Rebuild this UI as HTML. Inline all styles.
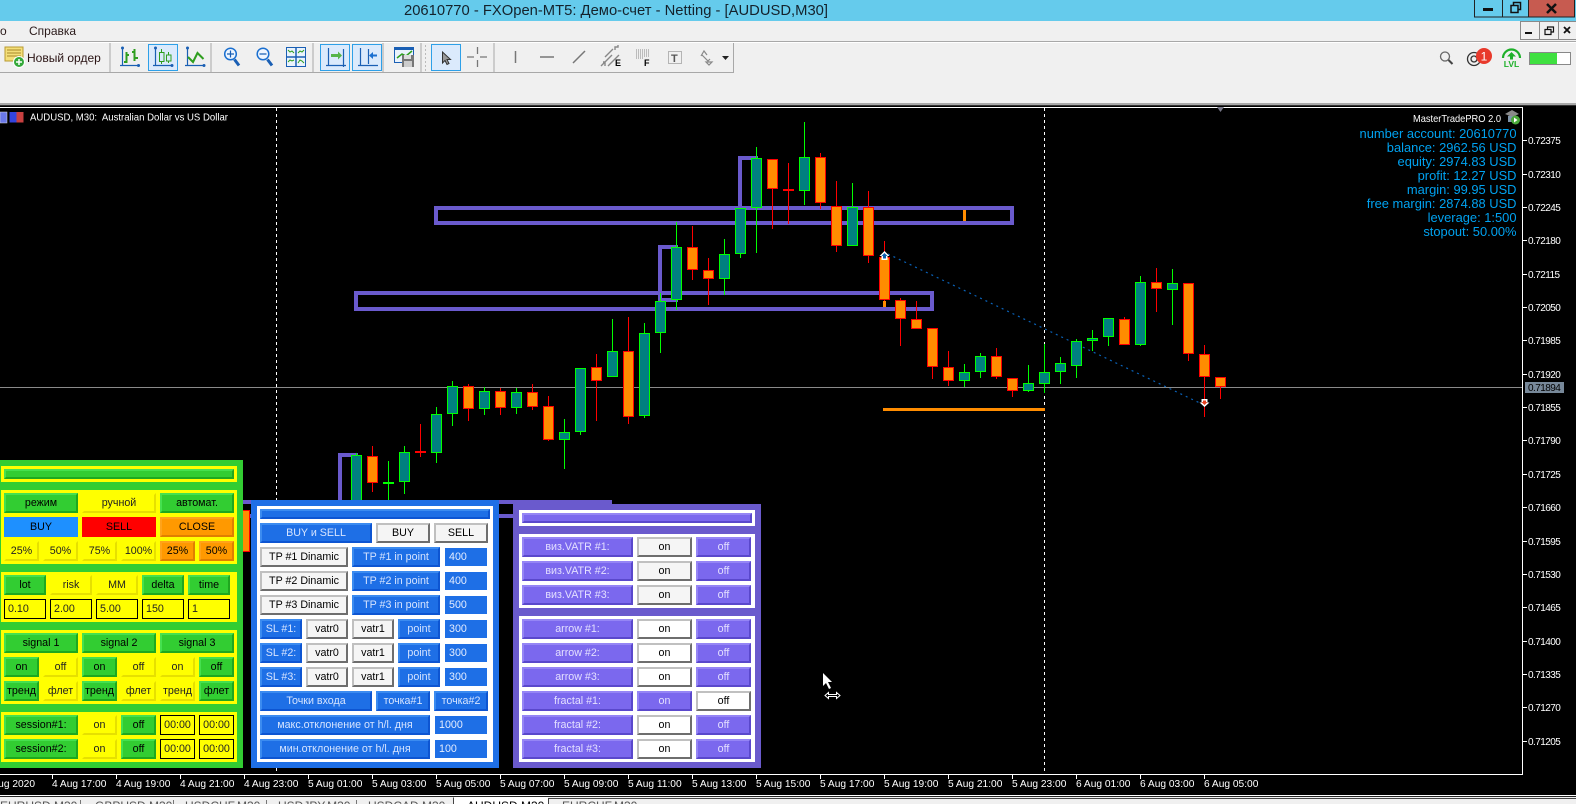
<!DOCTYPE html>
<html><head><meta charset="utf-8"><title>MT5</title>
<style>
html,body{margin:0;padding:0;background:#f0f0f0}
#p{position:relative;width:1576px;height:804px;overflow:hidden;background:#f0f0f0;font-family:"Liberation Sans","Noto Sans CJK SC",sans-serif}
#s{position:absolute;left:0;top:0}
text{font-family:"Liberation Sans","Noto Sans CJK SC",sans-serif}
.a,.b,.e,.be{position:absolute;box-sizing:border-box}
.b{height:20px;border:2px solid;text-align:center;font-size:10.7px;line-height:16px;color:#000;white-space:nowrap;overflow:hidden}
.g{background:#32cd32;border-color:#45e04f #1fa81f #1fa81f #45e04f}
.y{background:#ff0;border-color:#ff0 #e6e000 #e6e000 #ff0;color:#222}
.o{background:#f90;border-color:#ffa31a #e07f00 #e07f00 #ffa31a}
.w{background:#f5f5f5;border-color:#c0c0c0 #6e6e6e #6e6e6e #c0c0c0}
.wh{background:#fff;border-color:#c0c0c0 #6e6e6e #6e6e6e #c0c0c0}
.u{background:#1e6fe6;border-color:#3b8bf0 #0d55d2 #0d55d2 #3b8bf0;color:#d6e4ff}
.v{background:#7b68ee;border-color:#9585f5 #5a48cc #5a48cc #9585f5;color:#e4e0ff}
.e{height:20px;border:1px solid #000;background:#ff0;font-size:10.7px;line-height:18px;padding-left:3px;color:#222;white-space:nowrap}
.c{text-align:center;padding-left:0}
.be{height:18px;background:#1e6fe6;color:#e4edff;font-size:10.7px;line-height:18px;padding-left:4px}
.t{font-size:10.2px;fill:#fff}
.pr{font-size:10px;fill:#fff;letter-spacing:-.55px}
.inf{font-size:12.9px;fill:#00a2f0;text-anchor:end}
.tab{font-size:12px;fill:#555}
</style></head><body><div id="p">
<svg id="s" width="1576" height="804" viewBox="0 0 1576 804" xmlns="http://www.w3.org/2000/svg">
<!-- title bar -->
<rect x="0" y="0" width="1576" height="21" fill="#65cbec"/>
<text x="404" y="15" font-size="15" fill="#14222c" textLength="424" lengthAdjust="spacingAndGlyphs">20610770 - FXOpen-MT5: Демо-счет - Netting - [AUDUSD,M30]</text>
<rect x="1528.5" y="-1" width="46" height="18" fill="#c75b50" stroke="#222"/>
<rect x="1474.5" y="-1" width="28" height="18" fill="none" stroke="#222"/>
<rect x="1502.5" y="-1" width="26" height="18" fill="none" stroke="#222"/>
<rect x="1483" y="8" width="10" height="3" fill="#111"/>
<path d="M1511 5.5h7v7h-7zM1513.5 5V2.500h7v7h-2.500" fill="none" stroke="#111" stroke-width="1.500"/>
<path d="M1547 4l9 9M1556 4l-9 9" stroke="#111" stroke-width="2.500"/>
<!-- menu -->
<text x="0" y="35" font-size="12" fill="#2a1a1a">о</text>
<text x="29" y="35" font-size="12" fill="#2a1a1a">Справка</text>
<path d="M1520.500 39V21.500H1576M1539.500 21V39M1558.500 21V39M1520 39.500H1576" fill="none" stroke="#8a8a8a"/>
<rect x="1525" y="32" width="7" height="2" fill="#111"/>
<path d="M1545 29.500h6v5h-6zM1547.500 29v-2h6v5h-2" fill="none" stroke="#111" stroke-width="1.200"/>
<path d="M1564 27l6 6M1570 27l-6 6" stroke="#111" stroke-width="1.800"/>
<rect x="0" y="41" width="1576" height="1" fill="#a8a8a8"/>
<rect x="0" y="42" width="1576" height="1" fill="#fff"/>
<!-- toolbar -->
<rect x="0" y="72" width="734" height="1" fill="#a8a8a8"/>
<rect x="733" y="43" width="1" height="30" fill="#a8a8a8"/>
<path d="M110 43v29M211 43v29M313 43v29M383 43v29M421 43v29M494 43v29" stroke="#a8a8a8"/>
<path d="M425.500 45v27" stroke="#bbb" stroke-dasharray="2 2"/>
<g fill="#dbeafc" stroke="#2ea0e8"><rect x="148.500" y="44.500" width="29" height="26"/><rect x="320.500" y="44.500" width="29" height="26"/><rect x="352.500" y="44.500" width="29" height="26"/><rect x="431.500" y="44.500" width="29" height="26"/></g>
<!-- new order icon -->
<rect x="5" y="47" width="18" height="14" fill="#f4df79" stroke="#b99a30"/>
<path d="M7 50h14M7 53h14M7 56h14" stroke="#a88a2a"/>
<circle cx="19" cy="62" r="5.500" fill="#35a93a" stroke="#fff"/>
<path d="M19 59v6M16 62h6" stroke="#fff" stroke-width="1.500"/>
<text x="27" y="62" font-size="12" fill="#2a1414">Новый ордер</text>
<!-- chart icons -->
<g fill="none" stroke="#1a5fb4" stroke-width="1.200">
<path d="M122.500 48v18M120 65.500h20M155.500 48v18M153 65.500h20M187.500 48v18M185 65.500h20M328.500 48v18M326 65.500h20M343.500 49v18M360.500 48v18M358 65.500h20M368.500 49v15"/>
</g>
<g fill="#1a5fb4"><circle cx="122.500" cy="48" r="1.500"/><circle cx="138.500" cy="65.500" r="1.500"/><circle cx="155.500" cy="48" r="1.500"/><circle cx="172" cy="65.500" r="1.500"/><circle cx="187.500" cy="48" r="1.500"/><circle cx="204" cy="65.500" r="1.500"/></g>
<path d="M126.500 52v11M124 62h2M126 55h3M134.500 49v12M132 52h2M135 58h3" stroke="#2f9e1f" stroke-width="2" fill="none"/>
<path d="M161.500 49v15M168.500 52v11" stroke="#2f9e1f"/>
<rect x="159.500" y="52.500" width="4.500" height="9" fill="#dbeafc" stroke="#2f9e1f"/>
<rect x="166.500" y="55" width="4.500" height="6" fill="#dbeafc" stroke="#2f9e1f"/>
<path d="M188 57l5 5 4.500-9 6 6" fill="none" stroke="#2f9e1f" stroke-width="2"/>
<!-- zoom -->
<path d="M234.500 59.500l4.500 6M267.500 59.500l4.500 6" stroke="#1a5fb4" stroke-width="3"/>
<circle cx="230.500" cy="54" r="5.800" fill="#eef6ff" stroke="#1a6fd0" stroke-width="1.500"/>
<circle cx="263" cy="54" r="5.800" fill="#eef6ff" stroke="#1a6fd0" stroke-width="1.500"/>
<path d="M227 54h7M230.500 50.500v7M259.500 54h7" stroke="#1a5fb4" stroke-width="1.200"/>
<!-- tile -->
<rect x="286.500" y="47.500" width="19" height="19" fill="#eaf3fc" stroke="#1a5fb4"/>
<path d="M296 47.500v19M286.500 57h19" stroke="#1a5fb4" stroke-width="1.500"/>
<path d="M288 50l2 2 2-1 2 2M298 53l2-2 2 1 2-2M288 62l2-2 2 1 2-1M298 63l2-3 2 1 2 2" stroke="#2f9e1f" fill="none"/>
<!-- autoscroll / shift -->
<path d="M331 54h7v-2.500l4 4-4 4V57h-7z" fill="#55b54a"/>
<path d="M377 54.500h-4v-2.500l-4 3.500 4 3.500v-2.500h4z" fill="#1a6fd0"/>
<!-- save -->
<rect x="394.500" y="47.500" width="19" height="15" fill="#eaf3fc" stroke="#1a5fb4"/>
<rect x="394" y="47" width="20" height="3" fill="#1a5fb4"/>
<path d="M397 58l5-4 4 2 6-5" stroke="#2f9e1f" fill="none" stroke-width="1.500"/>
<rect x="402" y="55" width="12" height="12" fill="#777"/><rect x="404" y="55" width="7" height="4" fill="#ddd"/><rect x="404" y="61" width="8" height="6" fill="#ccc"/>
<!-- cursor etc -->
<path d="M442.500 52v11l2.500-2.500 2 4 2-1-2-4h3.500z" fill="#999" stroke="#333"/>
<path d="M467 57h7M480 57h7M477.500 47v7M477.500 60v7" stroke="#777" stroke-width="1.300"/>
<path d="M515.500 51v12M540 57h14M573 63l12-12" stroke="#777" stroke-width="1.500"/>
<path d="M601 66l11-11M608 66l11-11M605 57l8-8M605 66v-4h-2M615 50v-3h3v-2" fill="none" stroke="#888" stroke-width="1.400"/>
<text x="615" y="66" font-size="9" font-weight="bold" fill="#000">E</text>
<path d="M636 50h13M636 52h13M636 54h13M636 56h13M636 58h7" stroke="#888" stroke-dasharray="1 1"/>
<text x="644" y="66" font-size="9" font-weight="bold" fill="#000">F</text>
<rect x="668.500" y="51.500" width="13" height="12" fill="none" stroke="#777" stroke-dasharray="1 1"/>
<text x="671" y="62" font-size="11" font-family="Liberation Serif" font-weight="bold" fill="#555">T</text>
<path d="M701 56l3-5 3 4M702 55l6 6 2-2M706 62h6l-3 3z" fill="none" stroke="#888" stroke-width="1.200"/>
<path d="M722 56h7l-3.500 4z" fill="#222"/>
<!-- right toolbar -->
<circle cx="1445" cy="56.500" r="4.500" fill="none" stroke="#666" stroke-width="1.300"/>
<path d="M1448.500 60l4 4" stroke="#444" stroke-width="2"/>
<circle cx="1474" cy="59" r="6.500" fill="none" stroke="#333" stroke-width="1.300"/>
<circle cx="1474" cy="59" r="3" fill="none" stroke="#333" stroke-width="1.300"/>
<circle cx="1484" cy="56" r="8" fill="#e8392b"/>
<text x="1484" y="60.500" font-size="12" fill="#fff" text-anchor="middle">1</text>
<path d="M1503 58a8.500 8.500 0 0 1 17 0" fill="none" stroke="#1eb02a" stroke-width="2.200"/>
<path d="M1511.500 52l4.500 4.500h-3v3h-3v-3h-3z" fill="#1eb02a"/>
<text x="1511.500" y="67" font-size="8.500" font-weight="bold" fill="#1eb02a" text-anchor="middle">LVL</text>
<rect x="1529.500" y="52.500" width="41" height="12" fill="#fff" stroke="#888"/>
<rect x="1530" y="53" width="27" height="11" fill="#3fe040"/>
<!-- chart bg -->
<rect x="0" y="103" width="1576" height="2" fill="#a8a8a8"/>
<rect x="0" y="105" width="1576" height="1" fill="#333"/>
<rect x="0" y="106" width="1576" height="689" fill="#000"/>
<rect x="0" y="107" width="1523" height="1" fill="#fff"/>
<rect x="1522" y="107" width="1" height="668" fill="#fff"/>
<rect x="0" y="774" width="1523" height="1" fill="#fff"/>
<rect x="0" y="795" width="1576" height="1" fill="#fff"/>
<rect x="0" y="796" width="1576" height="1" fill="#222"/>
<!-- top-left chart icons -->
<rect x="0" y="112" width="7" height="11" fill="#6a78e8" stroke="#ddd" stroke-width=".5"/>
<rect x="9.500" y="112" width="7" height="10.500" fill="#3344dd"/><rect x="16.500" y="112" width="7" height="10.500" fill="#c84040"/>
<text x="30" y="120.500" font-size="10.200" fill="#fff" textLength="198" lengthAdjust="spacingAndGlyphs" style="white-space:pre">AUDUSD, M30:  Australian Dollar vs US Dollar</text>
<!-- grid lines -->
<path d="M276.500 108V774M1044.500 108V774" stroke="#fff" stroke-dasharray="3 3"/>
<rect x="0" y="387" width="1522" height="1" fill="#8a8a8a"/>
<path d="M1217 107h7l-3.500 5z" fill="#778"/>
<!-- purple -->
<g fill="none" stroke="#6a5acd" stroke-width="4">
<rect x="436" y="208" width="576" height="15"/>
<rect x="356" y="293" width="576" height="16"/>
<path d="M678 247H660V300H678M758 158H740V208M358 455H340V500"/>
<rect x="198" y="502" width="412" height="14"/>
</g>
<rect x="963" y="210" width="3" height="11" fill="#ff8c00"/>
<rect x="883" y="301" width="3" height="6" fill="#ff8c00"/>
<rect x="883" y="408" width="162" height="3" fill="#ff8c00"/>
<!-- dotted -->
<path d="M888 254L1204 405" stroke="#0a62b8" stroke-width="1.200" stroke-dasharray="2 4" fill="none"/>
<!-- wicks -->
<path fill="none" stroke="#0f0" d="M356.500 453V500M388.500 461V500M404.500 446V494M436.500 407V463M452.500 381V426M484.500 387V415M516.500 388V414M564.500 419V469M580.500 368V435M612.500 319V377M644.500 323V418M660.500 293V353M676.500 222V310M724.500 239V295M740.500 208V258M756.500 147V253M804.500 122V205M852.500 183V246M964.500 364V387M980.500 353V378M1028.500 365V392M1044.500 344V393M1060.500 357V384M1076.500 339V378M1092.500 330V351M1108.500 318V346M1140.500 276V346M1172.500 269V325"/>
<path fill="none" stroke="#f00" d="M372.500 446V492M420.500 424V457M468.500 384V421M500.500 388V415M532.500 384V410M548.500 396V441M596.500 354V421M628.500 317V424M692.500 226V280M708.500 258V305M772.500 159V229M788.500 163V224M820.500 153V209M836.500 181V252M868.500 191V263M884.500 241V301M900.500 298V346M916.500 301V329M932.500 328V379M948.500 351V386M996.500 348V379M1012.500 378V397M1124.500 317V345M1156.500 268V312M1188.500 283V361M1204.500 345V417M1220.500 377V399"/>
<!-- green bodies -->
<g fill="#008080" stroke="#0f0">
<rect x="351.500" y="455.500" width="10" height="45"/>
<rect x="383.500" y="482.500" width="10" height="1"/>
<rect x="399.500" y="452.500" width="10" height="29"/>
<rect x="431.500" y="414.500" width="10" height="38"/>
<rect x="447.500" y="386.500" width="10" height="27"/>
<rect x="479.500" y="391.500" width="10" height="17"/>
<rect x="511.500" y="392.500" width="10" height="15"/>
<rect x="559.500" y="432.500" width="10" height="7"/>
<rect x="575.500" y="368.500" width="10" height="63"/>
<rect x="607.500" y="351.500" width="10" height="25"/>
<rect x="639.500" y="333.500" width="10" height="82"/>
<rect x="655.500" y="301.500" width="10" height="31"/>
<rect x="671.500" y="247.500" width="10" height="52"/>
<rect x="719.500" y="254.500" width="10" height="24"/>
<rect x="735.500" y="208.500" width="10" height="45"/>
<rect x="751.500" y="158.500" width="10" height="49"/>
<rect x="799.500" y="157.500" width="10" height="33"/>
<rect x="847.500" y="207.500" width="10" height="38"/>
<rect x="959.500" y="372.500" width="10" height="8"/>
<rect x="975.500" y="356.500" width="10" height="15"/>
<rect x="1023.500" y="383.500" width="10" height="7"/>
<rect x="1039.500" y="372.500" width="10" height="11"/>
<rect x="1055.500" y="363.500" width="10" height="8"/>
<rect x="1071.500" y="341.500" width="10" height="24"/>
<rect x="1087.500" y="338.500" width="10" height="2"/>
<rect x="1103.500" y="318.500" width="10" height="18"/>
<rect x="1135.500" y="282.500" width="10" height="62"/>
<rect x="1167.500" y="283.500" width="10" height="6"/>
</g>
<!-- orange bodies -->
<g fill="#ff8c00" stroke="#f00">
<rect x="239.500" y="510.500" width="10" height="41"/>
<rect x="367.500" y="456.500" width="10" height="26"/>
<rect x="415.500" y="451.500" width="10" height="1"/>
<rect x="463.500" y="386.500" width="10" height="22"/>
<rect x="495.500" y="391.500" width="10" height="16"/>
<rect x="527.500" y="392.500" width="10" height="14"/>
<rect x="543.500" y="406.500" width="10" height="33"/>
<rect x="591.500" y="367.500" width="10" height="13"/>
<rect x="623.500" y="351.500" width="10" height="65"/>
<rect x="687.500" y="247.500" width="10" height="22"/>
<rect x="703.500" y="270.500" width="10" height="8"/>
<rect x="767.500" y="159.500" width="10" height="29"/>
<rect x="783.500" y="189.500" width="10" height="1"/>
<rect x="815.500" y="157.500" width="10" height="45"/>
<rect x="831.500" y="206.500" width="10" height="39"/>
<rect x="863.500" y="207.500" width="10" height="48"/>
<rect x="879.500" y="257.500" width="10" height="42"/>
<rect x="895.500" y="300.500" width="10" height="18"/>
<rect x="911.500" y="319.500" width="10" height="9"/>
<rect x="927.500" y="328.500" width="10" height="38"/>
<rect x="943.500" y="367.500" width="10" height="13"/>
<rect x="991.500" y="356.500" width="10" height="20"/>
<rect x="1007.500" y="378.500" width="10" height="12"/>
<rect x="1119.500" y="319.500" width="10" height="25"/>
<rect x="1151.500" y="282.500" width="10" height="6"/>
<rect x="1183.500" y="283.500" width="10" height="70"/>
<rect x="1199.500" y="354.500" width="10" height="22"/>
<rect x="1215.500" y="377.500" width="10" height="9"/>
</g>
<!-- arrows -->
<path d="M884.500 251l5 5h-2v4h-6v-4h-2z" fill="#fff"/>
<path d="M884.500 253l3 3h-1.500v2.500h-3V256h-1.500z" fill="#0a5fae"/>
<path d="M1204.500 407l5-4.500h-2V399h-6v3.500h-2z" fill="#fff"/>
<path d="M1204.500 405l3-3H1206v-1.500h-3v1.500h-1.500z" fill="#e8401f"/>
<!-- info -->
<text x="1413" y="122" font-size="10.500" fill="#fff" textLength="88" lengthAdjust="spacingAndGlyphs">MasterTradePRO 2.0</text>
<path d="M1505 114l7-4 7 4-7 3z" fill="#8a8a8a"/><rect x="1508" y="116" width="8" height="6" fill="#7f93a8"/>
<circle cx="1515.500" cy="120" r="4.500" fill="#4aa83a"/><path d="M1514 117.500l3.500 2.500-3.500 2.500z" fill="#fff"/>
<text class="inf" x="1516.500" y="138">number account: 20610770</text>
<text class="inf" x="1516.500" y="152">balance: 2962.56 USD</text>
<text class="inf" x="1516.500" y="166">equity: 2974.83 USD</text>
<text class="inf" x="1516.500" y="180">profit: 12.27 USD</text>
<text class="inf" x="1516.500" y="194">margin: 99.95 USD</text>
<text class="inf" x="1516.500" y="208">free margin: 2874.88 USD</text>
<text class="inf" x="1516.500" y="222">leverage: 1:500</text>
<text class="inf" x="1516.500" y="236">stopout: 50.00%</text>
<!-- price axis -->
<path stroke="#fff" d="M1523 140.500h4M1523 174.500h4M1523 207.500h4M1523 240.500h4M1523 274.500h4M1523 307.500h4M1523 340.500h4M1523 374.500h4M1523 407.500h4M1523 440.500h4M1523 474.500h4M1523 507.500h4M1523 541.500h4M1523 574.500h4M1523 607.500h4M1523 641.500h4M1523 674.500h4M1523 707.500h4M1523 741.500h4"/>
<text class="pr" x="1528" y="144">0.72375</text>
<text class="pr" x="1528" y="178">0.72310</text>
<text class="pr" x="1528" y="211">0.72245</text>
<text class="pr" x="1528" y="244">0.72180</text>
<text class="pr" x="1528" y="278">0.72115</text>
<text class="pr" x="1528" y="311">0.72050</text>
<text class="pr" x="1528" y="344">0.71985</text>
<text class="pr" x="1528" y="378">0.71920</text>
<rect x="1525" y="382" width="39" height="11" fill="#778899"/>
<text x="1528" y="391" font-size="10" letter-spacing="-.55" fill="#000">0.71894</text>
<text class="pr" x="1528" y="411">0.71855</text>
<text class="pr" x="1528" y="444">0.71790</text>
<text class="pr" x="1528" y="478">0.71725</text>
<text class="pr" x="1528" y="511">0.71660</text>
<text class="pr" x="1528" y="545">0.71595</text>
<text class="pr" x="1528" y="578">0.71530</text>
<text class="pr" x="1528" y="611">0.71465</text>
<text class="pr" x="1528" y="645">0.71400</text>
<text class="pr" x="1528" y="678">0.71335</text>
<text class="pr" x="1528" y="711">0.71270</text>
<text class="pr" x="1528" y="745">0.71205</text>
<!-- time axis -->
<path stroke="#fff" d="M52.500 775v4M116.500 775v4M180.500 775v4M244.500 775v4M308.500 775v4M372.500 775v4M436.500 775v4M500.500 775v4M564.500 775v4M628.500 775v4M692.500 775v4M756.500 775v4M820.500 775v4M884.500 775v4M948.500 775v4M1012.500 775v4M1076.500 775v4M1140.500 775v4M1204.500 775v4"/>
<text class="t" x="35" y="787" text-anchor="end">4 Aug 2020</text>
<text class="t" x="52" y="787">4 Aug 17:00</text>
<text class="t" x="116" y="787">4 Aug 19:00</text>
<text class="t" x="180" y="787">4 Aug 21:00</text>
<text class="t" x="244" y="787">4 Aug 23:00</text>
<text class="t" x="308" y="787">5 Aug 01:00</text>
<text class="t" x="372" y="787">5 Aug 03:00</text>
<text class="t" x="436" y="787">5 Aug 05:00</text>
<text class="t" x="500" y="787">5 Aug 07:00</text>
<text class="t" x="564" y="787">5 Aug 09:00</text>
<text class="t" x="628" y="787">5 Aug 11:00</text>
<text class="t" x="692" y="787">5 Aug 13:00</text>
<text class="t" x="756" y="787">5 Aug 15:00</text>
<text class="t" x="820" y="787">5 Aug 17:00</text>
<text class="t" x="884" y="787">5 Aug 19:00</text>
<text class="t" x="948" y="787">5 Aug 21:00</text>
<text class="t" x="1012" y="787">5 Aug 23:00</text>
<text class="t" x="1076" y="787">6 Aug 01:00</text>
<text class="t" x="1140" y="787">6 Aug 03:00</text>
<text class="t" x="1204" y="787">6 Aug 05:00</text>
<!-- tabs -->
<rect x="0" y="797" width="1576" height="7" fill="#f0f0f0"/>
<path d="M80.500 800v4M173.500 800v4M266.500 800v4M356.500 800v4" stroke="#777"/>
<rect x="454" y="797" width="94" height="7" fill="#fff"/>
<path d="M453.500 804V797.500M548.500 804V798.500H1576" fill="none" stroke="#444"/>
<text class="tab" x="0" y="810">EURUSD,M30</text>
<text class="tab" x="95" y="810">GBPUSD,M30</text>
<text class="tab" x="185" y="810">USDCHF,M30</text>
<text class="tab" x="278" y="810">USDJPY,M30</text>
<text class="tab" x="368" y="810">USDCAD,M30</text>
<text class="tab" x="467" y="810" style="fill:#000">AUDUSD,M30</text>
<text class="tab" x="562" y="810">EURCHF,M30</text>
</svg>

<!-- GREEN PANEL -->
<div class="a" style="left:0;top:460px;width:243px;height:308px;background:#32cd32"></div>
<div class="a" style="left:1px;top:466px;width:236px;height:16px;background:#ff0"></div>
<div class="b g" style="left:4px;top:469px;width:230px;height:10px"></div>
<div class="a" style="left:1px;top:490px;width:236px;height:74px;background:#ff0"></div>
<div class="a" style="left:1px;top:572px;width:236px;height:50px;background:#ff0"></div>
<div class="a" style="left:1px;top:630px;width:236px;height:74px;background:#ff0"></div>
<div class="a" style="left:1px;top:712px;width:236px;height:50px;background:#ff0"></div>
<div class="b g" style="left:4px;top:493px;width:74px">режим</div>
<div class="b y" style="left:82px;top:493px;width:74px">ручной</div>
<div class="b g" style="left:160px;top:493px;width:74px">автомат.</div>
<div class="b" style="left:4px;top:517px;width:74px;background:#1e90ff;border-color:#1e90ff">BUY</div>
<div class="b" style="left:82px;top:517px;width:74px;background:#f00;border-color:#f00">SELL</div>
<div class="b o" style="left:160px;top:517px;width:74px">CLOSE</div>
<div class="b y" style="left:4px;top:541px;width:35px">25%</div>
<div class="b y" style="left:43px;top:541px;width:35px">50%</div>
<div class="b y" style="left:82px;top:541px;width:35px">75%</div>
<div class="b y" style="left:121px;top:541px;width:35px">100%</div>
<div class="b o" style="left:160px;top:541px;width:35px">25%</div>
<div class="b o" style="left:199px;top:541px;width:35px">50%</div>
<div class="b g" style="left:4px;top:575px;width:42px">lot</div>
<div class="b y" style="left:50px;top:575px;width:42px">risk</div>
<div class="b y" style="left:96px;top:575px;width:42px">MM</div>
<div class="b g" style="left:142px;top:575px;width:42px">delta</div>
<div class="b g" style="left:188px;top:575px;width:42px">time</div>
<div class="e" style="left:4px;top:599px;width:42px">0.10</div>
<div class="e" style="left:50px;top:599px;width:42px">2.00</div>
<div class="e" style="left:96px;top:599px;width:42px">5.00</div>
<div class="e" style="left:142px;top:599px;width:42px">150</div>
<div class="e" style="left:188px;top:599px;width:42px">1</div>
<div class="b g" style="left:4px;top:633px;width:74px">signal 1</div>
<div class="b g" style="left:82px;top:633px;width:74px">signal 2</div>
<div class="b g" style="left:160px;top:633px;width:74px">signal 3</div>
<div class="b g" style="left:4px;top:657px;width:35px">on</div>
<div class="b y" style="left:43px;top:657px;width:35px">off</div>
<div class="b g" style="left:82px;top:657px;width:35px">on</div>
<div class="b y" style="left:121px;top:657px;width:35px">off</div>
<div class="b y" style="left:160px;top:657px;width:35px">on</div>
<div class="b g" style="left:199px;top:657px;width:35px">off</div>
<div class="b g" style="left:4px;top:681px;width:35px">тренд</div>
<div class="b y" style="left:43px;top:681px;width:35px">флет</div>
<div class="b g" style="left:82px;top:681px;width:35px">тренд</div>
<div class="b y" style="left:121px;top:681px;width:35px">флет</div>
<div class="b y" style="left:160px;top:681px;width:35px">тренд</div>
<div class="b g" style="left:199px;top:681px;width:35px">флет</div>
<div class="b g" style="left:4px;top:715px;width:74px">session#1:</div>
<div class="b y" style="left:82px;top:715px;width:35px">on</div>
<div class="b g" style="left:121px;top:715px;width:35px">off</div>
<div class="e c" style="left:160px;top:715px;width:35px">00:00</div>
<div class="e c" style="left:199px;top:715px;width:35px">00:00</div>
<div class="b g" style="left:4px;top:739px;width:74px">session#2:</div>
<div class="b y" style="left:82px;top:739px;width:35px">on</div>
<div class="b g" style="left:121px;top:739px;width:35px">off</div>
<div class="e c" style="left:160px;top:739px;width:35px">00:00</div>
<div class="e c" style="left:199px;top:739px;width:35px">00:00</div>

<!-- BLUE PANEL -->
<div class="a" style="left:251px;top:500px;width:248px;height:268px;background:#1e6fe6"></div>
<div class="a" style="left:257px;top:506px;width:236px;height:256px;background:#fff"></div>
<div class="b u" style="left:260px;top:509px;width:230px;height:10px"></div>
<div class="b u" style="left:260px;top:523px;width:112px">BUY и SELL</div>
<div class="b w" style="left:376px;top:523px;width:54px">BUY</div>
<div class="b w" style="left:434px;top:523px;width:54px">SELL</div>
<div class="b w" style="left:260px;top:547px;width:88px">TP #1 Dinamic</div>
<div class="b u" style="left:352px;top:547px;width:88px">TP #1 in point</div>
<div class="be" style="left:445px;top:548px;width:42px">400</div>
<div class="b w" style="left:260px;top:571px;width:88px">TP #2 Dinamic</div>
<div class="b u" style="left:352px;top:571px;width:88px">TP #2 in point</div>
<div class="be" style="left:445px;top:572px;width:42px">400</div>
<div class="b w" style="left:260px;top:595px;width:88px">TP #3 Dinamic</div>
<div class="b u" style="left:352px;top:595px;width:88px">TP #3 in point</div>
<div class="be" style="left:445px;top:596px;width:42px">500</div>
<div class="b u" style="left:260px;top:619px;width:42px">SL #1:</div>
<div class="b w" style="left:306px;top:619px;width:42px">vatr0</div>
<div class="b w" style="left:352px;top:619px;width:42px">vatr1</div>
<div class="b u" style="left:398px;top:619px;width:42px">point</div>
<div class="be" style="left:445px;top:620px;width:42px">300</div>
<div class="b u" style="left:260px;top:643px;width:42px">SL #2:</div>
<div class="b w" style="left:306px;top:643px;width:42px">vatr0</div>
<div class="b w" style="left:352px;top:643px;width:42px">vatr1</div>
<div class="b u" style="left:398px;top:643px;width:42px">point</div>
<div class="be" style="left:445px;top:644px;width:42px">300</div>
<div class="b u" style="left:260px;top:667px;width:42px">SL #3:</div>
<div class="b w" style="left:306px;top:667px;width:42px">vatr0</div>
<div class="b w" style="left:352px;top:667px;width:42px">vatr1</div>
<div class="b u" style="left:398px;top:667px;width:42px">point</div>
<div class="be" style="left:445px;top:668px;width:42px">300</div>
<div class="b u" style="left:260px;top:691px;width:112px">Точки входа</div>
<div class="b u" style="left:376px;top:691px;width:54px">точка#1</div>
<div class="b u" style="left:434px;top:691px;width:54px">точка#2</div>
<div class="b u" style="left:260px;top:715px;width:170px">макс.отклонение от h/l. дня</div>
<div class="be" style="left:435px;top:716px;width:52px">1000</div>
<div class="b u" style="left:260px;top:739px;width:170px">мин.отклонение от h/l. дня</div>
<div class="be" style="left:435px;top:740px;width:52px">100</div>

<!-- PURPLE PANEL -->
<div class="a" style="left:513px;top:504px;width:248px;height:264px;background:#6a5acd"></div>
<div class="a" style="left:519px;top:510px;width:236px;height:16px;background:#fff"></div>
<div class="b v" style="left:522px;top:513px;width:230px;height:10px"></div>
<div class="a" style="left:519px;top:534px;width:236px;height:74px;background:#fff"></div>
<div class="a" style="left:519px;top:616px;width:236px;height:146px;background:#fff"></div>
<div class="b v" style="left:522px;top:537px;width:111px">виз.VATR #1:</div>
<div class="b w" style="left:637px;top:537px;width:55px">on</div>
<div class="b v" style="left:696px;top:537px;width:55px">off</div>
<div class="b v" style="left:522px;top:561px;width:111px">виз.VATR #2:</div>
<div class="b w" style="left:637px;top:561px;width:55px">on</div>
<div class="b v" style="left:696px;top:561px;width:55px">off</div>
<div class="b v" style="left:522px;top:585px;width:111px">виз.VATR #3:</div>
<div class="b w" style="left:637px;top:585px;width:55px">on</div>
<div class="b v" style="left:696px;top:585px;width:55px">off</div>
<div class="b v" style="left:522px;top:619px;width:111px">arrow #1:</div>
<div class="b wh" style="left:637px;top:619px;width:55px">on</div>
<div class="b v" style="left:696px;top:619px;width:55px">off</div>
<div class="b v" style="left:522px;top:643px;width:111px">arrow #2:</div>
<div class="b wh" style="left:637px;top:643px;width:55px">on</div>
<div class="b v" style="left:696px;top:643px;width:55px">off</div>
<div class="b v" style="left:522px;top:667px;width:111px">arrow #3:</div>
<div class="b wh" style="left:637px;top:667px;width:55px">on</div>
<div class="b v" style="left:696px;top:667px;width:55px">off</div>
<div class="b v" style="left:522px;top:691px;width:111px">fractal #1:</div>
<div class="b v" style="left:637px;top:691px;width:55px">on</div>
<div class="b wh" style="left:696px;top:691px;width:55px">off</div>
<div class="b v" style="left:522px;top:715px;width:111px">fractal #2:</div>
<div class="b wh" style="left:637px;top:715px;width:55px">on</div>
<div class="b v" style="left:696px;top:715px;width:55px">off</div>
<div class="b v" style="left:522px;top:739px;width:111px">fractal #3:</div>
<div class="b wh" style="left:637px;top:739px;width:55px">on</div>
<div class="b v" style="left:696px;top:739px;width:55px">off</div>

<!-- cursor -->
<svg class="a" style="left:820px;top:670px" width="30" height="32" viewBox="0 0 30 32">
<path d="M3 3v13l3-3 3 6 2-1-3-6h4z" fill="#fff"/>
<path d="M5 25.500l3.500-3v2h8v-2l3.500 3-3.500 3v-2h-8v2z" fill="#000" stroke="#fff"/>
</svg>
</div></body></html>
